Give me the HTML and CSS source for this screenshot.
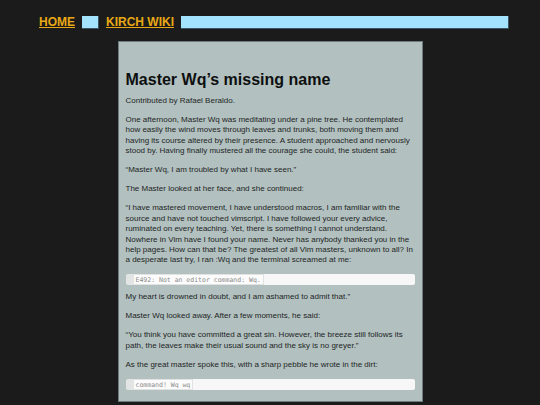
FILE: index.html
```html
<!DOCTYPE html>
<html lang="en">
<head>
<meta charset="utf-8">
<title>Master Wq’s missing name</title>
<link rel="stylesheet" href="styles.css">
</head>
<body>
<nav class="nav">
  <a class="nav-link" href="#">HOME</a>
  <span class="nav-sep"></span>
  <a class="nav-link" href="#">KIRCH WIKI</a>
  <span class="nav-fill"></span>
</nav>
<main class="card">
  <h1 class="title">Master Wq’s missing name</h1>
  <p>Contributed by Rafael Beraldo.</p>
  <p>One afternoon, Master Wq was meditating under a pine tree. He contemplated how easily the wind moves through leaves and trunks, both moving them and having its course altered by their presence. A student approached and nervously stood by. Having finally mustered all the courage she could, the student said:</p>
  <p>“Master Wq, I am troubled by what I have seen.”</p>
  <p>The Master looked at her face, and she continued:</p>
  <p>“I have mastered movement, I have understood macros, I am familiar with the source and have not touched vimscript. I have followed your every advice, ruminated on every teaching. Yet, there is something I cannot understand. Nowhere in Vim have I found your name. Never has anybody thanked you in the help pages. How can that be? The greatest of all Vim masters, unknown to all? In a desperate last try, I ran :Wq and the terminal screamed at me:</p>
  <pre class="code"><code>E492: Not an editor command: Wq.</code></pre>
  <p>My heart is drowned in doubt, and I am ashamed to admit that.”</p>
  <p>Master Wq looked away. After a few moments, he said:</p>
  <p>“You think you have committed a great sin. However, the breeze still follows its path, the leaves make their usual sound and the sky is no greyer.”</p>
  <p>As the great master spoke this, with a sharp pebble he wrote in the dirt:</p>
  <pre class="code"><code>command! Wq wq</code></pre>
</main>
</body>
</html>
```

FILE: styles.css
```css
html, body {
  margin: 0;
  padding: 0;
  background: #1b1b1b;
  font-family: "Liberation Sans", Arial, sans-serif;
}

.nav {
  display: flex;
  gap: 7px;
  margin-top: 16px;
  padding: 0 31px 0 39px;
  height: 13px;
}

.nav-link {
  font-size: 12px;
  font-weight: bold;
  line-height: 12px;
  color: #e8a915;
  text-decoration: underline;
  text-underline-offset: 1px;
}

.nav-sep,
.nav-fill {
  background: #a3e3fe;
  border-right: 1px solid #3b5663;
  border-bottom: 1px solid #3b5663;
  box-sizing: border-box;
}

.nav-sep {
  width: 17px;
}

.nav-fill {
  flex: 1;
}

.card {
  box-sizing: border-box;
  width: 305px;
  margin: 12px auto 0;
  padding: 29px 7px 4px;
  background: #b2c0bf;
  border: 1px solid #6f7c7c;
  color: #222626;
}

.title {
  margin: 0 0 7px;
  font-size: 16px;
  line-height: 18px;
  font-weight: bold;
  color: #0d0f0f;
}

.card p {
  margin: 0 0 8.5px;
  font-size: 8px;
  line-height: 10.45px;
}

.code {
  margin: 0 0 7px;
  height: 11px;
  box-sizing: border-box;
  background: #f7f7f7;
  border-left: 8px solid #e3e5e5;
  border-radius: 2px;
  font-family: "Liberation Mono", "Courier New", monospace;
  font-size: 6.5px;
  line-height: 9px;
  color: #8c8c8c;
  display: flex;
  align-items: stretch;
  padding: 0;
}

.code code {
  display: block;
  padding: 1px 2px 0;
  background: #fbfbfb;
  border: 1px solid #e2e2e2;
  border-left: 0;
  box-sizing: border-box;
  height: 11px;
}
```
